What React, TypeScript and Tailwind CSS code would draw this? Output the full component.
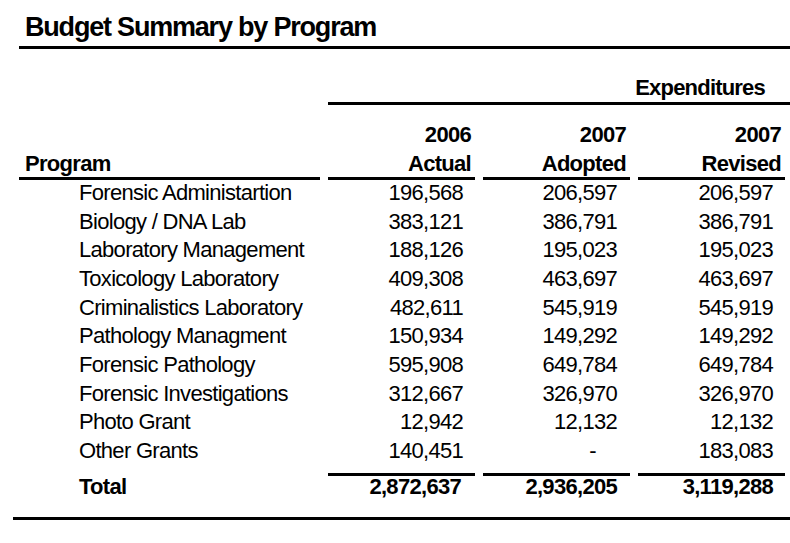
import React from "react";

const rows: [string, string, string, string][] = [
  ["Forensic Administartion", "196,568", "206,597", "206,597"],
  ["Biology / DNA Lab", "383,121", "386,791", "386,791"],
  ["Laboratory Management", "188,126", "195,023", "195,023"],
  ["Toxicology Laboratory", "409,308", "463,697", "463,697"],
  ["Criminalistics Laboratory", "482,611", "545,919", "545,919"],
  ["Pathology Managment", "150,934", "149,292", "149,292"],
  ["Forensic Pathology", "595,908", "649,784", "649,784"],
  ["Forensic Investigations", "312,667", "326,970", "326,970"],
  ["Photo Grant", "12,942", "12,132", "12,132"],
  ["Other Grants", "140,451", "-", "183,083"],
];

export default function App() {
  return (
    <div
      className="w-[790px] h-[543px] bg-white text-black overflow-hidden"
      style={{ fontFamily: '"Liberation Sans", Arial, sans-serif' }}
    >
      {/* Title */}
      <div className="ml-[19px] pt-[14px] pb-[5px] border-b-[3px] border-black">
        <div className="pl-[6px] text-[27px] leading-[27px] font-bold tracking-[-1.2px]">
          Budget Summary by Program
        </div>
      </div>

      {/* Expenditures */}
      <div className="ml-[328px] pt-[28px] pb-[3px] border-b-[3px] border-black">
        <div className="text-right pr-[25px] text-[22px] leading-[22px] font-bold tracking-[-0.8px]">
          Expenditures
        </div>
      </div>

      {/* Table */}
      <div className="ml-[19px] grid grid-cols-[301px_147px_147px_147px] gap-x-2 text-[22px] tracking-[-0.7px]">
        {/* Header */}
        <div className="pt-[19px] pb-[2px] border-b-[3px] border-black font-bold flex flex-col gap-[7px] pl-[6px]">
          <div className="leading-[22px]">&nbsp;</div>
          <div className="leading-[22px]">Program</div>
        </div>
        {[
          ["2006", "Actual"],
          ["2007", "Adopted"],
          ["2007", "Revised"],
        ].map(([y, l], i) => (
          <div
            key={i}
            className="pt-[19px] pb-[2px] border-b-[3px] border-black font-bold flex flex-col gap-[7px] text-right pr-[4px]"
          >
            <div className="leading-[22px]">{y}</div>
            <div className="leading-[22px]">{l}</div>
          </div>
        ))}

        {/* Rows */}
        <div className="col-span-4 -mt-px grid grid-cols-[301px_147px_147px_147px] gap-x-2">
          {rows.map(([name, a, b, c]) => (
            <React.Fragment key={name}>
              <div className="pl-[60px] h-[28.67px] leading-[28.67px] whitespace-nowrap">{name}</div>
              <div className="text-right pr-[12px] h-[28.67px] leading-[28.67px]">{a}</div>
              <div
                className={
                  b === "-"
                    ? "text-right pr-[34px] h-[28.67px] leading-[28.67px]"
                    : "text-right pr-[13px] h-[28.67px] leading-[28.67px]"
                }
              >
                {b}
              </div>
              <div className="text-right pr-[12px] h-[28.67px] leading-[28.67px]">{c}</div>
            </React.Fragment>
          ))}
        </div>

        {/* Total */}
        <div className="mt-[7px] pt-[3px] pl-[60px] font-bold leading-[22px]">Total</div>
        <div className="mt-[7px] border-t-[3px] border-black font-bold leading-[22px] text-right pr-[14px]">
          2,872,637
        </div>
        <div className="mt-[7px] border-t-[3px] border-black font-bold leading-[22px] text-right pr-[13px]">
          2,936,205
        </div>
        <div className="mt-[7px] border-t-[3px] border-black font-bold leading-[22px] text-right pr-[12px]">
          3,119,288
        </div>
      </div>

      {/* Bottom rule */}
      <div className="ml-[13px] mt-[19px] h-[3px] bg-black" />
    </div>
  );
}
